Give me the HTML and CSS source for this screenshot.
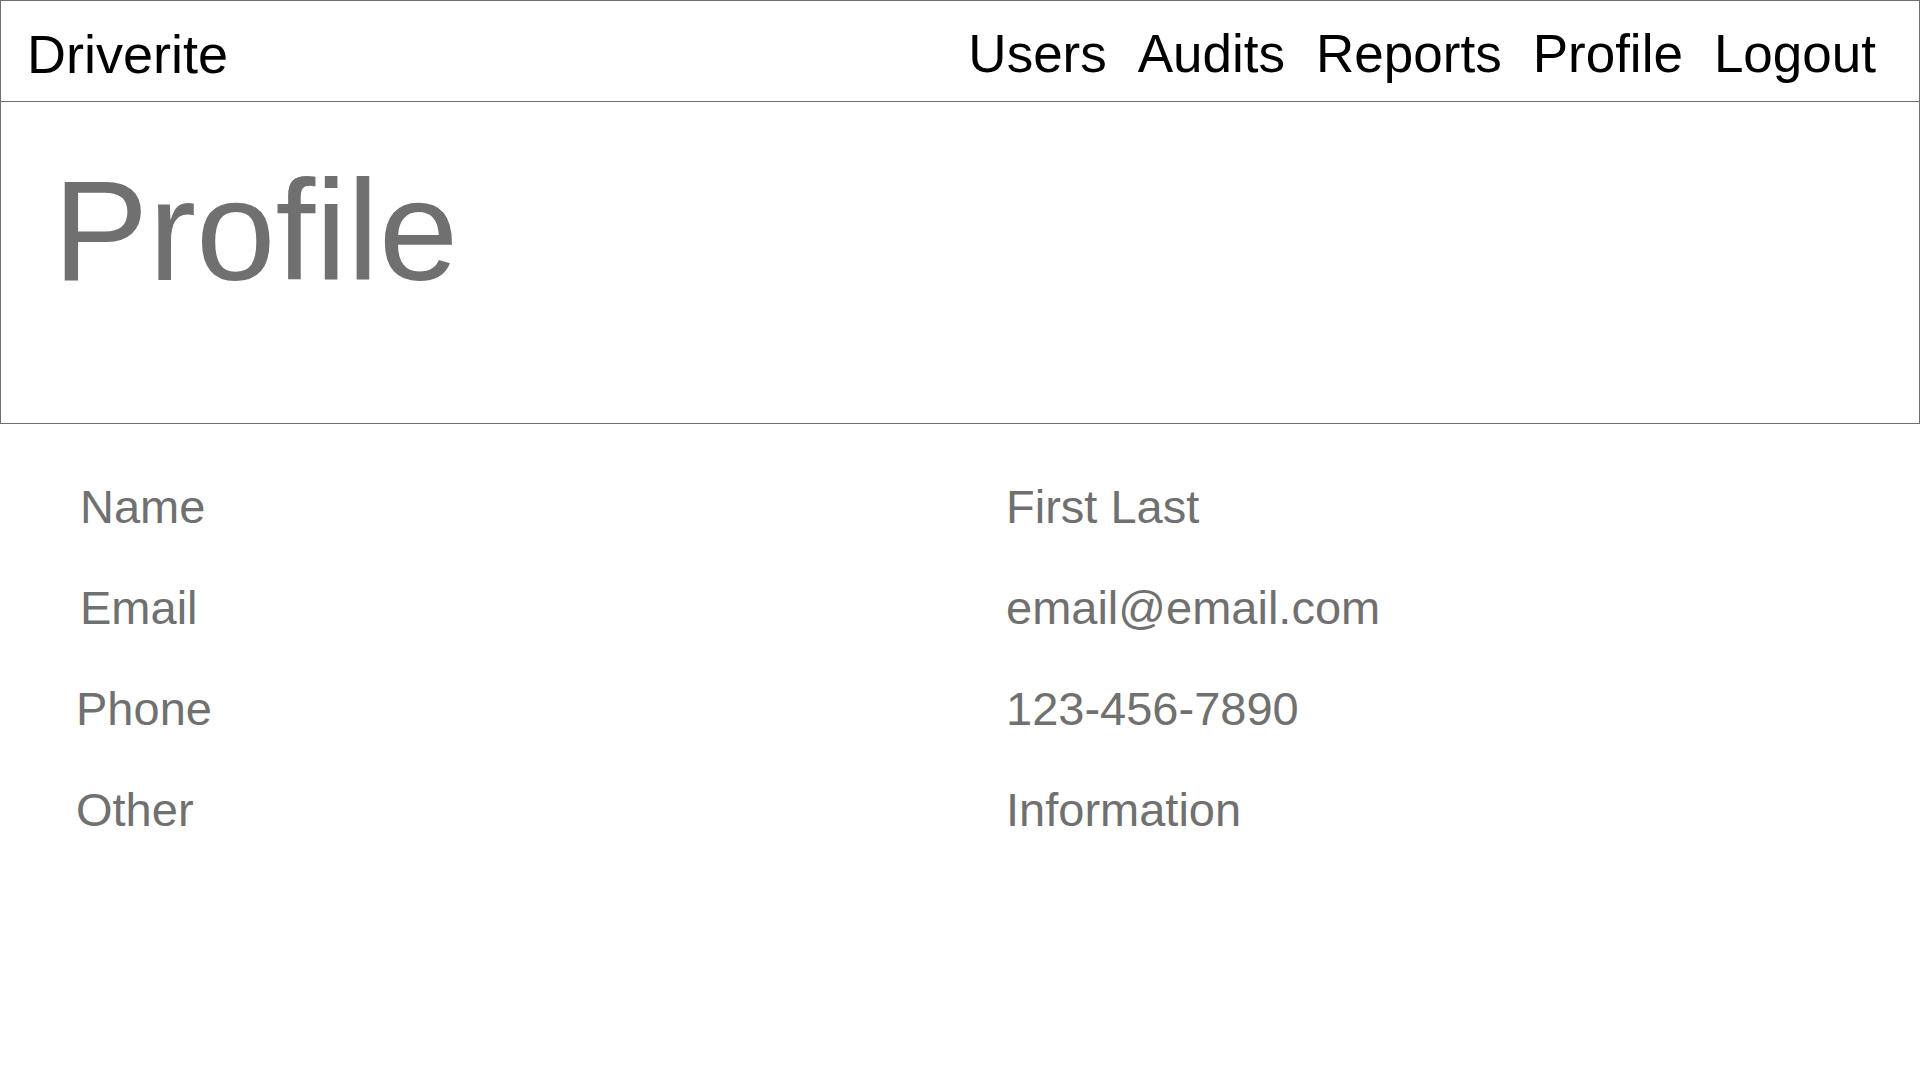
FILE: index.html
```html
<!DOCTYPE html>
<html lang="en">
<head>
<meta charset="utf-8">
<title>Driverite - Profile</title>
<link rel="stylesheet" href="styles.css">
</head>
<body>
<header class="topbar">
  <div class="brand">Driverite</div>
  <nav class="nav">
    <a class="nav-link" href="#">Users</a>
    <a class="nav-link" href="#">Audits</a>
    <a class="nav-link" href="#">Reports</a>
    <a class="nav-link" href="#">Profile</a>
    <a class="nav-link" href="#">Logout</a>
  </nav>
</header>
<section class="hero">
  <h1 class="hero-title">Profile</h1>
</section>
<main class="details">
  <div class="label">Name</div><div class="value">First Last</div>
  <div class="label">Email</div><div class="value">email@email.com</div>
  <div class="label label--shift">Phone</div><div class="value">123-456-7890</div>
  <div class="label label--shift">Other</div><div class="value">Information</div>
</main>
</body>
</html>
```
FILE: styles.css
```css
html, body {
  margin: 0;
  padding: 0;
  background: #ffffff;
}
body {
  font-family: "Liberation Sans", Arial, sans-serif;
  width: 1920px;
}
.topbar {
  box-sizing: border-box;
  height: 102px;
  border: 1px solid #707070;
  padding: 26px 43px 0 26px;
  display: flex;
  justify-content: space-between;
  align-items: flex-start;
}
.brand {
  font-size: 54px;
  line-height: 54px;
  color: #000;
}
.nav {
  display: flex;
  gap: 31px;
}
.nav-link {
  font-size: 53px;
  line-height: 54px;
  color: #000;
  text-decoration: none;
}
.hero {
  box-sizing: border-box;
  height: 322px;
  border: 1px solid #707070;
  border-top: none;
  padding: 57px 0 0 52px;
}
.hero-title {
  margin: 0;
  font-size: 143px;
  line-height: 1;
  font-weight: normal;
  color: #707070;
}
.details {
  display: grid;
  grid-template-columns: 926px 1fr;
  padding: 32px 0 0 80px;
  font-size: 47px;
  line-height: 101px;
  color: #707070;
}
.label--shift {
  margin-left: -4px;
}
```
